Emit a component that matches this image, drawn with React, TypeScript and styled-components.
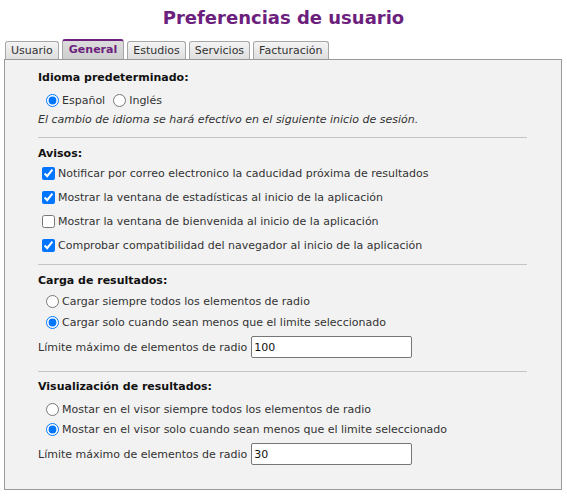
import React from 'react'
import styled, { createGlobalStyle, css } from 'styled-components'

const GlobalStyle = createGlobalStyle`
  body {
    margin: 0;
    background: #ffffff;
    font-family: "DejaVu Sans", Verdana, sans-serif;
    font-size: 11px;
    color: #222;
  }
`

const Page = styled.div`
  width: 567px;
  height: 496px;
  box-sizing: border-box;
  padding-top: 6px;
`

const Title = styled.h1`
  margin: 0;
  height: 33px;
  text-align: center;
  font-size: 18px;
  line-height: 24px;
  font-weight: bold;
  color: #6c1f7d;
`

const TabBar = styled.div`
  display: flex;
  align-items: flex-end;
  gap: 3px;
  padding-left: 5px;
  height: 20px;
`

const Tab = styled.div<{ $active?: boolean }>`
  box-sizing: border-box;
  height: 18px;
  padding: 0 5px;
  line-height: 17px;
  border: 1px solid #a6a6a6;
  border-bottom: none;
  border-radius: 3px 3px 0 0;
  background: linear-gradient(#f4f4f4, #dedede);
  color: #333;
  white-space: nowrap;

  ${p => p.$active && css`
    height: 20px;
    line-height: 18px;
    padding: 0 6px;
    border-top: 2px solid #6c1f7d;
    background: linear-gradient(#dcdcdc, #cfcfcf);
    color: #6c1f7d;
    font-weight: bold;
  `}
`

const Panel = styled.div`
  box-sizing: border-box;
  margin-left: 4px;
  width: 558px;
  height: 431px;
  border: 1px solid #999;
  background: #f2f2f2;
  padding: 10px 34px 0 33px;
`

const Section = styled.div<{ $top?: number }>`
  display: flex;
  flex-direction: column;
  margin-top: ${p => p.$top ?? 0}px;
`

const Heading = styled.div`
  font-weight: bold;
  color: #111;
  line-height: 16px;
  height: 16px;
`

const Row = styled.label<{ $top?: number; $h?: number }>`
  display: flex;
  align-items: center;
  height: ${p => p.$h ?? 20}px;
  margin-top: ${p => p.$top ?? 0}px;
  color: #333;
  white-space: nowrap;
`

const Radio = styled.input.attrs({ type: 'radio' })<{ $left?: number }>`
  width: 13px;
  height: 13px;
  margin: 0 3px 0 ${p => p.$left ?? 8}px;
`

const Check = styled.input.attrs({ type: 'checkbox' })`
  width: 13px;
  height: 13px;
  margin: 0 3px 0 4px;
`

const Note = styled.div`
  margin-top: 4px;
  line-height: 16px;
  font-style: italic;
  color: #333;
`

const Divider = styled.hr<{ $top: number }>`
  margin: ${p => p.$top}px 0 0 0;
  border: none;
  border-top: 1px solid #c4c4c4;
  height: 0;
`

const LimitRow = styled.div<{ $top: number }>`
  display: flex;
  align-items: center;
  gap: 4px;
  margin-top: ${p => p.$top}px;
  color: #333;
`

const LimitInput = styled.input`
  box-sizing: border-box;
  width: 161px;
  height: 22px;
  border: 1px solid #767676;
  border-radius: 2px;
  padding: 0 2px;
  background: #fff;
  font-family: "DejaVu Sans", Verdana, sans-serif;
  font-size: 11px;
  color: #111;
`

const tabs = ['Usuario', 'General', 'Estudios', 'Servicios', 'Facturación']

const avisos = [
  { text: 'Notificar por correo electronico la caducidad próxima de resultados', on: true },
  { text: 'Mostrar la ventana de estadísticas al inicio de la aplicación', on: true },
  { text: 'Mostrar la ventana de bienvenida al inicio de la aplicación', on: false },
  { text: 'Comprobar compatibilidad del navegador al inicio de la aplicación', on: true },
]

export default function App() {
  return (
    <Page>
      <GlobalStyle />
      <Title>Preferencias de usuario</Title>
      <TabBar>
        {tabs.map(t => (
          <Tab key={t} $active={t === 'General'}>{t}</Tab>
        ))}
      </TabBar>
      <Panel>
        <Section>
          <Heading>Idioma predeterminado:</Heading>
          <Row $top={6} $h={16}>
            <Radio name="idioma" defaultChecked />Español
            <Radio name="idioma" $left={8} />Inglés
          </Row>
          <Note>El cambio de idioma se hará efectivo en el siguiente inicio de sesión.</Note>
        </Section>
        <Divider $top={9} />

        <Section $top={8}>
          <Heading>Avisos:</Heading>
          {avisos.map((a, i) => (
            <Row key={a.text} $top={i === 0 ? 1 : 4}>
              <Check defaultChecked={a.on} />{a.text}
            </Row>
          ))}
        </Section>
        <Divider $top={9} />

        <Section $top={8}>
          <Heading>Carga de resultados:</Heading>
          <Row $top={2}>
            <Radio name="carga" />Cargar siempre todos los elementos de radio
          </Row>
          <Row $top={1}>
            <Radio name="carga" defaultChecked />Cargar solo cuando sean menos que el limite seleccionado
          </Row>
          <LimitRow $top={4}>
            Límite máximo de elementos de radio
            <LimitInput defaultValue="100" />
          </LimitRow>
        </Section>
        <Divider $top={13} />

        <Section $top={7}>
          <Heading>Visualización de resultados:</Heading>
          <Row $top={4}>
            <Radio name="visor" />Mostar en el visor siempre todos los elementos de radio
          </Row>
          <Row>
            <Radio name="visor" defaultChecked />Mostar en el visor solo cuando sean menos que el limite seleccionado
          </Row>
          <LimitRow $top={4}>
            Límite máximo de elementos de radio
            <LimitInput defaultValue="30" />
          </LimitRow>
        </Section>
      </Panel>
    </Page>
  )
}
